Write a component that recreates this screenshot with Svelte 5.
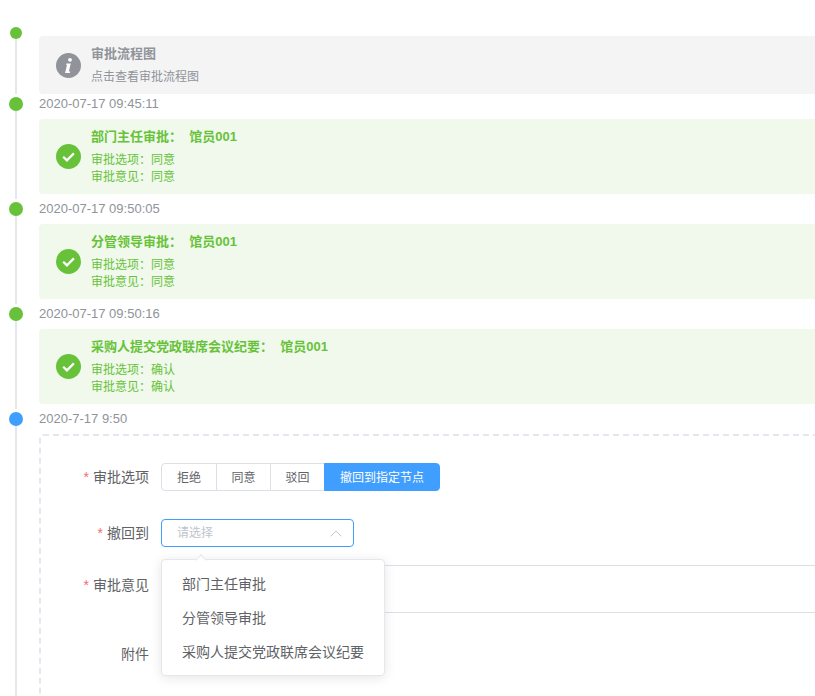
<script>
  const approved = [
    { time: '2020-07-17 09:45:11', title: '部门主任审批：  馆员001', option: '同意', opinion: '同意' },
    { time: '2020-07-17 09:50:05', title: '分管领导审批：  馆员001', option: '同意', opinion: '同意' },
    { time: '2020-07-17 09:50:16', title: '采购人提交党政联席会议纪要：  馆员001', option: '确认', opinion: '确认' }
  ]
  const choices = ['拒绝', '同意', '驳回', '撤回到指定节点']
  const nodes = ['部门主任审批', '分管领导审批', '采购人提交党政联席会议纪要']
</script>

<div class="page">
  <ul class="timeline">
    <li class="item first">
      <span class="tail"></span>
      <span class="dot small"></span>
      <div class="alert info">
        <svg class="icon" viewBox="0 0 25 25">
          <circle cx="12.5" cy="12.5" r="12.5" fill="#909399" />
          <circle cx="14" cy="6.8" r="1.9" fill="#fff" />
          <path d="M10.4 10.4h4.4l-2 8.2h1.5l-.4 1.3H9.1l1.9-8.2H10z" fill="#fff" />
        </svg>
        <div>
          <div class="title">审批流程图</div>
          <div class="desc first-desc">点击查看审批流程图</div>
        </div>
      </div>
    </li>

    {#each approved as step}
      <li class="item">
        <span class="tail"></span>
        <span class="dot"></span>
        <div class="time">{step.time}</div>
        <div class="alert success">
          <svg class="icon" viewBox="0 0 25 25">
            <circle cx="12.5" cy="12.5" r="12.5" fill="#67c23a" />
            <path d="M7.2 12.8l3.7 3.6 7-7" fill="none" stroke="#fff" stroke-width="2.2" />
          </svg>
          <div>
            <div class="title">{step.title}</div>
            <div class="desc">审批选项：{step.option}</div>
            <div class="desc">审批意见：{step.opinion}</div>
          </div>
        </div>
      </li>
    {/each}

    <li class="item last">
      <span class="tail"></span>
      <span class="dot blue"></span>
      <div class="time">2020-7-17 9:50</div>
      <div class="form">
        <div class="row first-row">
          <label class="required">审批选项</label>
          <div class="group">
            {#each choices as c, i}
              <button class:active={i === 3}>{c}</button>
            {/each}
          </div>
        </div>
        <div class="row select-row">
          <label class="required">撤回到</label>
          <div class="select">
            <span class="placeholder">请选择</span>
            <svg class="caret" width="12" height="7" viewBox="0 0 12 7">
              <path d="M.7 6.3L6 1l5.3 5.3" fill="none" stroke="#c0c4cc" stroke-width="1" />
            </svg>
            <div class="dropdown">
              <span class="arrow"></span>
              {#each nodes as n}
                <div class="option">{n}</div>
              {/each}
            </div>
          </div>
        </div>
        <div class="row text-row">
          <label class="required">审批意见</label>
          <div class="textarea"></div>
        </div>
        <div class="row">
          <label>附件</label>
        </div>
      </div>
    </li>
  </ul>
</div>

<style>
  :global(body) {
    margin: 0;
    background: #fff;
  }
  .page {
    width: 815px;
    height: 696px;
    overflow: hidden;
    font-family: "Liberation Sans", "Noto Sans CJK SC", sans-serif;
  }
  .timeline {
    list-style: none;
    margin: 0;
    padding: 27px 0 0;
    width: 920px;
  }
  .item {
    position: relative;
    padding: 0 0 5px 39px;
  }
  .item.first {
    padding-top: 9px;
    padding-bottom: 0;
  }
  .tail {
    position: absolute;
    left: 15px;
    top: 3px;
    bottom: 0;
    width: 2px;
    background: #e4e7ed;
  }
  .dot {
    position: absolute;
    left: 9px;
    top: 3px;
    width: 14px;
    height: 14px;
    border-radius: 50%;
    background: #67c23a;
  }
  .dot.small {
    left: 10px;
    top: 0;
    width: 12px;
    height: 12px;
  }
  .dot.blue {
    background: #409eff;
  }
  .time {
    height: 20px;
    line-height: 20px;
    margin-bottom: 5px;
    font-size: 13px;
    color: #909399;
  }
  .alert {
    display: flex;
    align-items: center;
    gap: 10px;
    padding: 8px 16px 8px 17px;
    border-radius: 4px;
  }
  .alert.info {
    background: #f4f4f5;
    color: #909399;
  }
  .alert.success {
    background: #f0f9eb;
    color: #67c23a;
  }
  .icon {
    width: 25px;
    height: 25px;
    flex: none;
  }
  .title {
    font-size: 13px;
    font-weight: 700;
    line-height: 20px;
    margin-bottom: 5px;
    white-space: pre;
  }
  .desc {
    font-size: 12px;
    line-height: 17px;
  }
  .form {
    border: 2px dashed #e4e7ed;
    border-radius: 4px;
    padding-top: 27px;
    height: 400px;
    font-size: 14px;
    color: #606266;
  }
  .row {
    display: grid;
    grid-template-columns: 108px 1fr;
    column-gap: 12px;
    margin-bottom: 28px;
    line-height: 28px;
  }
  .select-row {
    margin-bottom: 18px;
  }
  .text-row {
    margin-bottom: 27px;
  }
  .text-row label {
    line-height: 40px;
  }
  label {
    text-align: right;
  }
  .required::before {
    content: "*";
    color: #f56c6c;
    margin-right: 4px;
  }
  .group {
    display: flex;
  }
  .group button {
    height: 28px;
    width: 55px;
    padding: 0;
    margin-left: -1px;
    border: 1px solid #dcdfe6;
    background: #fff;
    font: inherit;
    font-size: 12px;
    color: #606266;
  }
  .group button:first-child {
    margin-left: 0;
    width: 56px;
    border-radius: 4px 0 0 4px;
  }
  .group button.active {
    width: 116px;
    background: #409eff;
    border-color: #409eff;
    color: #fff;
    border-radius: 0 4px 4px 0;
  }
  .select {
    position: relative;
    box-sizing: border-box;
    width: 193px;
    height: 28px;
    border: 1px solid #409eff;
    border-radius: 4px;
    padding-left: 15px;
    font-size: 12px;
    line-height: 26px;
    z-index: 2;
  }
  .placeholder {
    color: #c0c4cc;
  }
  .caret {
    position: absolute;
    right: 11px;
    top: 10px;
  }
  .dropdown {
    position: absolute;
    left: -1px;
    top: 39px;
    box-sizing: border-box;
    width: 224px;
    height: 117px;
    padding: 7px 0;
    background: #fff;
    border: 1px solid #e4e7ed;
    border-radius: 4px;
    box-shadow: 0 2px 12px rgba(0, 0, 0, 0.1);
  }
  .arrow {
    position: absolute;
    left: 35px;
    top: -4px;
    width: 7px;
    height: 7px;
    background: #fff;
    border-top: 1px solid #e4e7ed;
    border-left: 1px solid #e4e7ed;
    transform: rotate(45deg);
  }
  .option {
    height: 34px;
    line-height: 34px;
    padding: 0 20px;
    font-size: 14px;
    color: #606266;
    white-space: nowrap;
  }
  .textarea {
    box-sizing: border-box;
    height: 48px;
    border: 1px solid #dcdfe6;
    border-radius: 4px;
    width: 100%;
  }
</style>
